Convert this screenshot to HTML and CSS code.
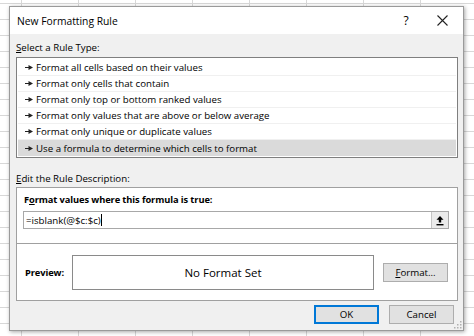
FILE: index.html
```html
<!DOCTYPE html>
<html>
<head>
<meta charset="utf-8">
<link rel="stylesheet" href="styles.css">
</head>
<body>
<div class="dialog">
  <div class="titlebar">
    <span class="title">New Formatting Rule</span>
    <span class="help">?</span>
    <span class="close">
      <svg width="11" height="11" viewBox="0 0 11 11"><path d="M0.5 0.5 L10.5 10.5 M10.5 0.5 L0.5 10.5" stroke="#222" stroke-width="1.1" fill="none"/></svg>
    </span>
  </div>
  <div class="content">
    <div class="label first"><u>S</u>elect a Rule Type:</div>
    <div class="listbox">
      <div class="row"><svg class="arrow" width="8" height="5" viewBox="0 0 8 5"><path d="M0 2 H4 V2.9 H0 Z M3.5 0 L8 2.5 L3.5 5 Z" fill="#222"/></svg>Format all cells based on their values</div>
      <div class="row"><svg class="arrow" width="8" height="5" viewBox="0 0 8 5"><path d="M0 2 H4 V2.9 H0 Z M3.5 0 L8 2.5 L3.5 5 Z" fill="#222"/></svg>Format only cells that contain</div>
      <div class="row"><svg class="arrow" width="8" height="5" viewBox="0 0 8 5"><path d="M0 2 H4 V2.9 H0 Z M3.5 0 L8 2.5 L3.5 5 Z" fill="#222"/></svg>Format only top or bottom ranked values</div>
      <div class="row"><svg class="arrow" width="8" height="5" viewBox="0 0 8 5"><path d="M0 2 H4 V2.9 H0 Z M3.5 0 L8 2.5 L3.5 5 Z" fill="#222"/></svg>Format only values that are above or below average</div>
      <div class="row"><svg class="arrow" width="8" height="5" viewBox="0 0 8 5"><path d="M0 2 H4 V2.9 H0 Z M3.5 0 L8 2.5 L3.5 5 Z" fill="#222"/></svg>Format only unique or duplicate values</div>
      <div class="row selected"><svg class="arrow" width="8" height="5" viewBox="0 0 8 5"><path d="M0 2 H4 V2.9 H0 Z M3.5 0 L8 2.5 L3.5 5 Z" fill="#222"/></svg>Use a formula to determine which cells to format</div>
    </div>
    <div class="label second"><u>E</u>dit the Rule Description:</div>
    <div class="desc">
      <div class="formula-section">
        <div class="bold">F<u>o</u>rmat values where this formula is true:</div>
        <div class="input">
          <span class="input-text">=isblank(@$c:$c)<span class="caret"></span></span>
          <span class="collapse-btn">
            <svg width="10" height="11" viewBox="0 0 10 11"><path d="M5 1 L1.5 4.8 H3.8 V7.5 H6.2 V4.8 H8.5 Z" fill="#000"/><rect x="1.5" y="9" width="7" height="1.4" fill="#000"/></svg>
          </span>
        </div>
      </div>
      <div class="preview-section">
        <span class="bold preview-label">Preview:</span>
        <div class="preview-box">No Format Set</div>
        <button class="btn format-btn"><u>F</u>ormat...</button>
      </div>
    </div>
    <div class="actions">
      <button class="btn ok">OK</button>
      <button class="btn cancel">Cancel</button>
    </div>
  </div>
  <svg class="grip" width="8" height="8" viewBox="0 0 8 8"><g fill="#b0b0b0"><rect x="6" y="0" width="1.5" height="1.5"/><rect x="3" y="3" width="1.5" height="1.5"/><rect x="6" y="3" width="1.5" height="1.5"/><rect x="0" y="6" width="1.5" height="1.5"/><rect x="3" y="6" width="1.5" height="1.5"/><rect x="6" y="6" width="1.5" height="1.5"/></g></svg>
</div>
</body>
</html>
```

FILE: styles.css
```css
html, body {
  margin: 0;
  padding: 0;
}
body {
  width: 474px;
  height: 336px;
  overflow: hidden;
  background-color: #fff;
  background-image:
    linear-gradient(to right, #d8d8d8 1px, transparent 1px),
    linear-gradient(to bottom, #d8d8d8 1px, transparent 1px);
  background-size: 57px 16px, 57px 16px;
  background-position: 21px 3px, 21px 3px;
  font-family: "Open Sans", "Noto Sans", sans-serif;
  font-size: 9.7px;
  color: #000;
  padding-top: 6px;
  padding-left: 9px;
  box-sizing: border-box;
}
.dialog {
  position: relative;
  width: 455px;
  height: 325px;
  box-sizing: border-box;
  background: #f0f0f0;
  border: 1px solid #9a9a9a;
  box-shadow: 1px 1px 4px rgba(0,0,0,0.35);
  display: flex;
  flex-direction: column;
}
.titlebar {
  height: 27px;
  background: #fff;
  display: flex;
  align-items: center;
  padding-left: 7px;
  flex-shrink: 0;
}
.title {
  font-size: 10.3px;
  flex: 1;
}
.help {
  font-size: 12px;
  width: 14px;
  margin-right: 24px;
  text-align: center;
}
.close {
  width: 11px;
  height: 11px;
  margin-right: 15px;
  display: flex;
}
.content {
  padding: 0 5px 0 6px;
  display: flex;
  flex-direction: column;
}
.label {
  height: 14px;
  line-height: 14px;
}
.label.first { margin-top: 7px; margin-bottom: 2px; }
.label.second { margin-top: 14px; margin-bottom: 1px; }
.listbox {
  background: #fff;
  border: 1px solid #7f7f7f;
  padding: 2px 1px 0 1px;
  height: 101px;
  box-sizing: border-box;
}
.row {
  height: 16px;
  line-height: 15px;
  border-bottom: 1px solid #f0f0f0;
  box-sizing: border-box;
  padding-left: 7px;
  white-space: nowrap;
  display: flex;
  align-items: center;
}
.row.selected {
  background: #dadada;
  border-bottom: none;
}
.arrow {
  margin-right: 3px;
  flex-shrink: 0;
}
.desc {
  background: #fff;
  border: 1px solid #a0a0a0;
  display: flex;
  flex-direction: column;
}
.formula-section {
  height: 56px;
  padding: 5px 8px 0 6px;
  box-sizing: border-box;
  border-bottom: 1px solid #a0a0a0;
}
.bold {
  font-weight: bold;
  font-size: 9.3px;
  letter-spacing: -0.1px;
}
.formula-section .bold {
  height: 14px;
  line-height: 14px;
  padding-left: 1px;
}
.input {
  margin-top: 4px;
  height: 18px;
  border: 1px solid #a8a8a8;
  box-sizing: border-box;
  display: flex;
  align-items: center;
  justify-content: space-between;
}
.input-text {
  padding-left: 2px;
  display: flex;
  align-items: center;
}
.caret {
  display: inline-block;
  width: 1px;
  height: 12px;
  background: #000;
}
.collapse-btn {
  width: 17px;
  height: 16px;
  background: #ebebeb;
  border-left: 1px solid #c4c4c4;
  display: flex;
  align-items: center;
  justify-content: center;
  box-sizing: border-box;
}
.preview-section {
  height: 56px;
  display: flex;
  align-items: center;
  padding: 0 8px 0 8px;
  box-sizing: border-box;
}
.preview-label {
  width: 47px;
}
.preview-box {
  width: 302px;
  height: 35px;
  box-sizing: border-box;
  border: 1px solid #8a8a8a;
  display: flex;
  align-items: center;
  justify-content: center;
  font-size: 11.5px;
  margin-right: 9px;
}
.btn {
  font-family: "Open Sans", "Noto Sans", sans-serif;
  font-size: 9.7px;
  color: #000;
  background: #e1e1e1;
  border: 1px solid #adadad;
  padding: 0;
  margin: 0;
  box-sizing: border-box;
}
.format-btn {
  width: 65px;
  height: 19px;
}
.actions {
  display: flex;
  justify-content: flex-end;
  gap: 10px;
  margin-top: 4px;
  padding-right: 4px;
}
.ok, .cancel {
  width: 65px;
  height: 19px;
}
.ok {
  border: 2px solid #0078d7;
}
.grip {
  position: absolute;
  right: 1px;
  bottom: 1px;
}
```
